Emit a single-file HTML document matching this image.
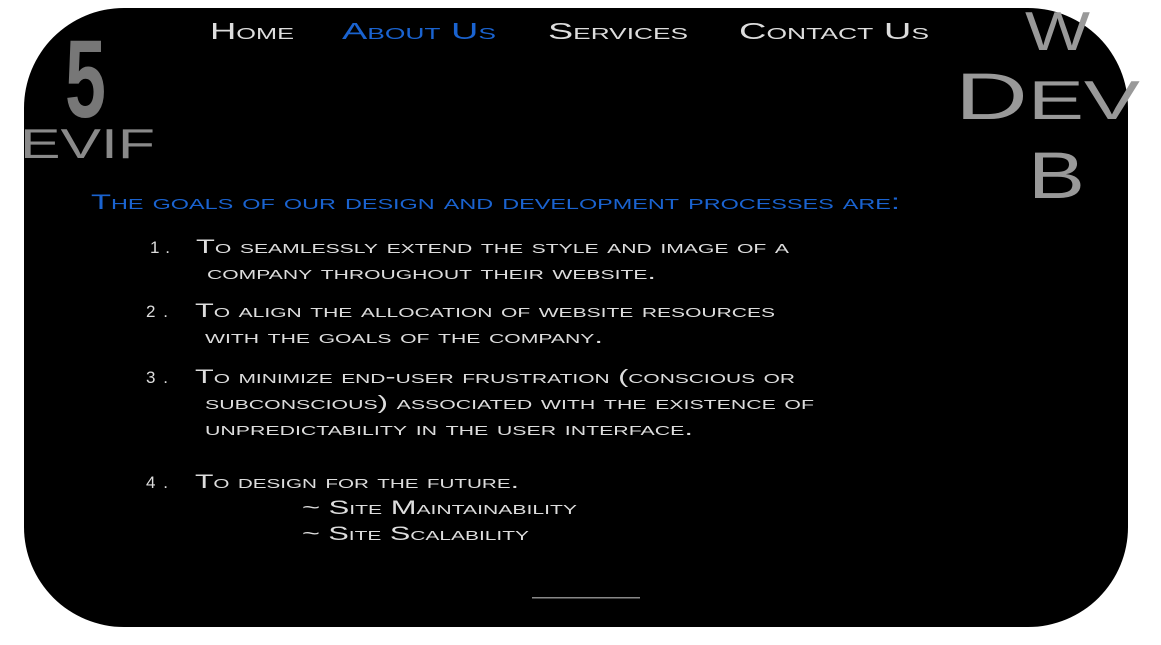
<!DOCTYPE html>
<html><head><meta charset="utf-8"><style>
html,body{margin:0;padding:0;background:#fff;width:1161px;height:645px;overflow:hidden}
svg{display:block}
text{font-family:"Liberation Sans",sans-serif;font-variant:small-caps}
</style></head><body>
<svg width="1161" height="645" viewBox="0 0 1161 645">
<rect x="24" y="8" width="1104" height="619" rx="100" ry="100" fill="#000"/>
<g fill="#ddd" font-size="23">
<text x="210" y="39" textLength="84" lengthAdjust="spacingAndGlyphs">Home</text>
<text x="342" y="39" textLength="154" lengthAdjust="spacingAndGlyphs" fill="#1a63d0">About Us</text>
<text x="548" y="39" textLength="140" lengthAdjust="spacingAndGlyphs">Services</text>
<text x="739" y="39" textLength="190" lengthAdjust="spacingAndGlyphs">Contact Us</text>
</g>
<text x="65" y="117" font-size="110" font-weight="bold" fill="#777" textLength="41" lengthAdjust="spacingAndGlyphs" style="font-variant:normal">5</text>
<text x="20" y="158" font-size="42" fill="#8a8a8a" textLength="135" lengthAdjust="spacingAndGlyphs" style="font-variant:normal">EVIF</text>
<g fill="#999" style="font-variant:normal">
<text x="1025" y="50" font-size="55" textLength="65" lengthAdjust="spacingAndGlyphs">W</text>
<text x="955" y="119" font-size="66" textLength="185" lengthAdjust="spacingAndGlyphs">D<tspan font-size="55">EV</tspan></text>
<text x="1028" y="198" font-size="66" textLength="57" lengthAdjust="spacingAndGlyphs">B</text>
</g>
<text x="91" y="209" font-size="21" fill="#1a63d0" textLength="809" lengthAdjust="spacingAndGlyphs">The goals of our design and development processes are:</text>
<g fill="#ddd" font-size="19">
<text x="150" y="253" style="font-variant:normal" font-size="17" textLength="20" lengthAdjust="spacing">1.</text>
<text x="196" y="253" textLength="593" lengthAdjust="spacingAndGlyphs">To seamlessly extend the style and image of a</text>
<text x="207" y="279" textLength="449" lengthAdjust="spacingAndGlyphs">company throughout their website.</text>
<text x="146" y="317" style="font-variant:normal" font-size="17" textLength="22" lengthAdjust="spacing">2.</text>
<text x="195" y="317" textLength="580" lengthAdjust="spacingAndGlyphs">To align the allocation of website resources</text>
<text x="205" y="343" textLength="398" lengthAdjust="spacingAndGlyphs">with the goals of the company.</text>
<text x="146" y="383" style="font-variant:normal" font-size="17" textLength="22" lengthAdjust="spacing">3.</text>
<text x="195" y="383" textLength="600" lengthAdjust="spacingAndGlyphs">To minimize end-user frustration (conscious or</text>
<text x="205" y="409" textLength="609" lengthAdjust="spacingAndGlyphs">subconscious) associated with the existence of</text>
<text x="205" y="435" textLength="488" lengthAdjust="spacingAndGlyphs">unpredictability in the user interface.</text>
<text x="146" y="488" style="font-variant:normal" font-size="17" textLength="22" lengthAdjust="spacing">4.</text>
<text x="195" y="488" textLength="324" lengthAdjust="spacingAndGlyphs">To design for the future.</text>
<text x="302" y="514" textLength="275" lengthAdjust="spacingAndGlyphs">~ Site Maintainability</text>
<text x="302" y="540" textLength="227" lengthAdjust="spacingAndGlyphs">~ Site Scalability</text>
</g>
<rect x="532" y="597" width="108" height="1.5" fill="#888"/>
</svg>
</body></html>
